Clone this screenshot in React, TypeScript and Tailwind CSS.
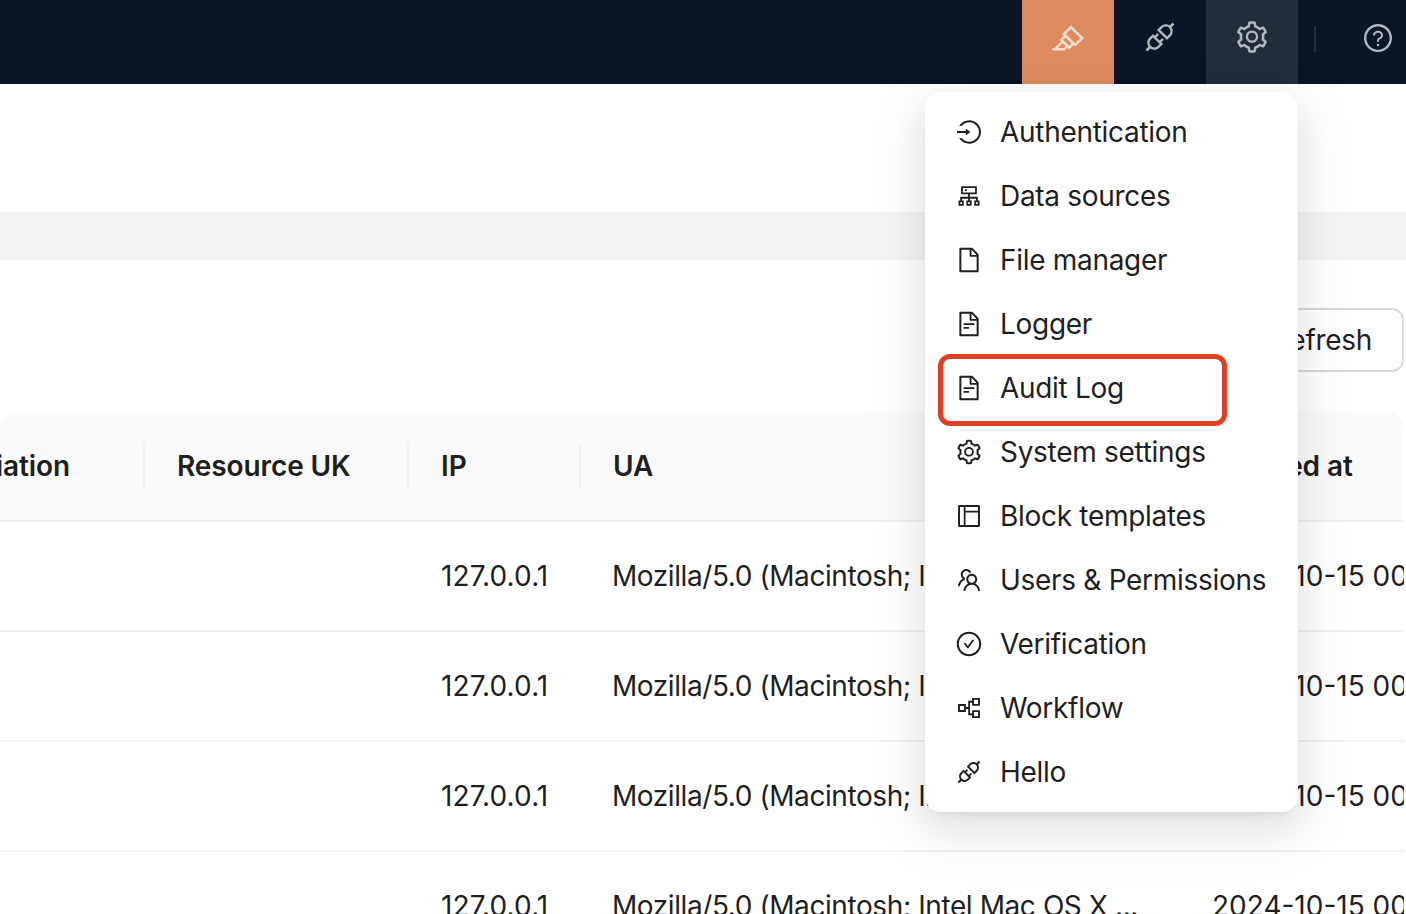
import {
  AiOutlineApi,
  AiOutlineCheckCircle,
  AiOutlineCluster,
  AiOutlineFile,
  AiOutlineFileText,
  AiOutlineHighlight,
  AiOutlineLayout,
  AiOutlineLogin,
  AiOutlinePartition,
  AiOutlineQuestionCircle,
  AiOutlineSetting,
  AiOutlineTeam,
} from 'react-icons/ai'

const menu = [
  { label: 'Authentication', icon: AiOutlineLogin },
  { label: 'Data sources', icon: AiOutlineCluster },
  { label: 'File manager', icon: AiOutlineFile },
  { label: 'Logger', icon: AiOutlineFileText },
  { label: 'Audit Log', icon: AiOutlineFileText },
  { label: 'System settings', icon: AiOutlineSetting },
  { label: 'Block templates', icon: AiOutlineLayout },
  { label: 'Users & Permissions', icon: AiOutlineTeam },
  { label: 'Verification', icon: AiOutlineCheckCircle },
  { label: 'Workflow', icon: AiOutlinePartition },
  { label: 'Hello', icon: AiOutlineApi },
]

const rows = [0, 1, 2, 3]

export default function App() {
  return (
    <div className="relative h-[914px] w-[1406px] overflow-hidden bg-white font-['Inter',sans-serif] text-[28px] tracking-[-0.3px] text-[#1f1f1f]">
      {/* Header */}
      <div className="flex h-[84px] items-center justify-end bg-[#0a1626]">
        <button className="flex h-full w-[92px] items-center justify-center bg-[#dd8a5f] pb-[9px] text-[#f8ddcf]">
          <AiOutlineHighlight className="h-9 w-9" />
        </button>
        <button className="flex h-full w-[92px] items-center justify-center pb-[10px] text-[#b3b7bd]">
          <AiOutlineApi className="h-9 w-9" />
        </button>
        <button className="flex h-full w-[92px] items-center justify-center bg-[#222d3a] pb-[10px] text-[#b3b7bd]">
          <AiOutlineSetting className="h-9 w-9" />
        </button>
        <div className="mb-[6px] ml-4 h-[26px] w-0.5 bg-[#262f3d]" />
        <button className="mb-2 ml-[46px] mr-3 flex text-[#b3b7bd]">
          <AiOutlineQuestionCircle className="h-8 w-8" />
        </button>
      </div>

      <div className="h-32" />
      <div className="h-12 bg-[#f4f4f4]" />

      {/* Toolbar */}
      <div className="flex h-[152px] items-start justify-end pr-0.5 pt-12">
        <button className="h-16 w-[210px] rounded-xl border-2 border-[#d9d9d9] pr-[30px] text-right">Refresh</button>
      </div>

      {/* Table */}
      <div className="mr-0.5 overflow-hidden rounded-t-2xl">
        <div className="flex h-[110px] items-center border-b-2 border-[#f0f0f0] bg-[#fafafa] font-semibold tracking-[-0.1px]">
          <div className="flex w-[143px] justify-end pr-[73px] whitespace-nowrap">Association</div>
          <div className="h-11 w-0.5 bg-[#f0f0f0]" />
          <div className="w-[262px] pl-8">Resource UK</div>
          <div className="h-11 w-0.5 bg-[#f0f0f0]" />
          <div className="w-[170px] pl-8">IP</div>
          <div className="h-11 w-0.5 bg-[#f0f0f0]" />
          <div className="w-[600px] pl-8">UA</div>
          <div className="pl-8 whitespace-nowrap">Created at</div>
        </div>
        {rows.map(r => (
          <div key={r} className="flex h-[110px] items-center border-b-2 border-[#f0f0f0]">
            <div className="w-[409px] shrink-0" />
            <div className="w-[171px] shrink-0 pl-8 tracking-[0.1px]">127.0.0.1</div>
            <div className="w-[600px] shrink-0 pl-8 tracking-[-0.42px] whitespace-nowrap">Mozilla/5.0 (Macintosh; Intel Mac OS X ...</div>
            <div className="pl-8 tracking-normal whitespace-nowrap">2024-10-15 00:00:00</div>
          </div>
        ))}
      </div>

      {/* Settings dropdown */}
      <div className="absolute left-[925px] top-[92px] w-[373px] rounded-2xl bg-white py-2 shadow-[0_12px_32px_rgba(0,0,0,0.08),0_6px_12px_-8px_rgba(0,0,0,0.12),0_18px_56px_16px_rgba(0,0,0,0.05)]">
        {menu.map(item => (
          <div key={item.label} className="flex h-16 items-center gap-[17px] px-[30px] whitespace-nowrap">
            <item.icon className="h-7 w-7 shrink-0" />
            {item.label}
          </div>
        ))}
      </div>

      {/* Annotation around Audit Log */}
      <div className="absolute left-[938px] top-[354px] h-[72px] w-[289px] rounded-xl border-[5px] border-[#e23f22]" />
    </div>
  )
}
